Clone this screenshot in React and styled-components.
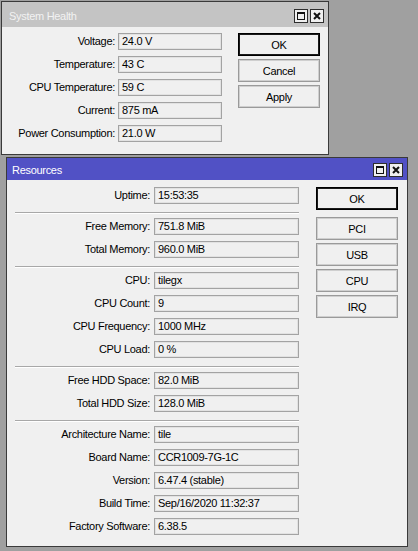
import React from 'react';
import styled, { createGlobalStyle } from 'styled-components';

const GlobalStyle = createGlobalStyle`
  html, body {
    margin: 0;
    padding: 0;
    background: #a0a0a0;
  }
  body {
    font-family: "Liberation Sans", Arial, sans-serif;
    font-size: 11px;
    letter-spacing: -0.3px;
    color: #000;
  }
`;

const Desktop = styled.div`
  position: relative;
  width: 418px;
  height: 551px;
  overflow: hidden;
  background: #a0a0a0;
`;

/* windows sit on the desktop at their own place */
const Window = styled.div`
  position: absolute;
  left: ${(p) => p.$x}px;
  top: ${(p) => p.$y}px;
  width: ${(p) => p.$w}px;
  height: ${(p) => p.$h}px;
  box-sizing: border-box;
  border: 1px solid #3a3a3a;
  background: #f0f0f0;
  display: flex;
  flex-direction: column;
`;

const TitleBar = styled.div`
  height: ${(p) => p.$height}px;
  box-sizing: border-box;
  padding: ${(p) => p.$padTop}px 4px 0 ${(p) => p.$padLeft}px;
  background: ${(p) => (p.$active ? '#5151c5' : '#c4c4c4')};
  color: ${(p) => (p.$active ? '#ffffff' : '#f2f2f2')};
  display: flex;
  align-items: center;
  justify-content: space-between;
  flex-shrink: 0;
`;

const TitleText = styled.span`
  font-size: 11px;
  line-height: 14px;
`;

const TitleButtons = styled.div`
  display: flex;
  gap: 2px;
`;

const TitleButton = styled.div`
  width: 14px;
  height: 14px;
  box-sizing: border-box;
  border: 1px solid #2e2e2e;
  background: #f0f0f0;
  display: flex;
  align-items: center;
  justify-content: center;
`;

const Body = styled.div`
  display: flex;
  padding: ${(p) => p.$padTop}px 0 0 ${(p) => p.$padLeft}px;
  gap: ${(p) => p.$gap}px;
`;

const Form = styled.div`
  display: flex;
  flex-direction: column;
  width: ${(p) => p.$width}px;
`;

const Row = styled.div`
  display: grid;
  grid-template-columns: ${(p) => p.$labelWidth}px 1fr;
  column-gap: ${(p) => p.$gap}px;
  height: 17px;
  margin-bottom: 6px;
`;

const Label = styled.div`
  text-align: right;
  line-height: 17px;
  white-space: nowrap;
`;

const Field = styled.div`
  box-sizing: border-box;
  height: 17px;
  border: 1px solid #a3a3a3;
  box-shadow: inset 0 0 0 1px #e2e2e2;
  padding-left: 3px;
  line-height: 15px;
  white-space: nowrap;
  overflow: hidden;
`;

const Separator = styled.div`
  height: 0;
  border-top: 1px solid #a8a8a8;
  border-bottom: 1px solid #ffffff;
  margin: 2px 0 4px;
`;

const Buttons = styled.div`
  display: flex;
  flex-direction: column;
  gap: 3px;
`;

const Button = styled.div`
  width: 82px;
  height: 23px;
  box-sizing: border-box;
  border: 1px solid ${(p) => (p.$default ? '#000' : '#9a9a9a')};
  box-shadow: inset 0 0 0 1px ${(p) => (p.$default ? '#1a1a1a' : '#cfcfcf')};
  background: #f0f0f0;
  display: flex;
  align-items: center;
  justify-content: center;
  font-size: 11px;
  margin-bottom: ${(p) => p.$spaceAfter || 0}px;
`;

const MaximizeIcon = () => (
  <svg width="10" height="10" viewBox="0 0 10 10">
    <rect x="1.5" y="1.5" width="7" height="7" fill="none" stroke="#111" strokeWidth="1" />
    <rect x="1" y="1" width="8" height="2" fill="#111" />
  </svg>
);

const CloseIcon = () => (
  <svg width="10" height="10" viewBox="0 0 10 10">
    <path d="M2 2 L8 8 M8 2 L2 8" stroke="#111" strokeWidth="2" />
  </svg>
);

const WindowTitle = ({ title, active, height, padTop, padLeft }) => (
  <TitleBar $active={active} $height={height} $padTop={padTop} $padLeft={padLeft}>
    <TitleText>{title}</TitleText>
    <TitleButtons>
      <TitleButton>
        <MaximizeIcon />
      </TitleButton>
      <TitleButton>
        <CloseIcon />
      </TitleButton>
    </TitleButtons>
  </TitleBar>
);

const healthRows = [
  ['Voltage', '24.0 V'],
  ['Temperature', '43 C'],
  ['CPU Temperature', '59 C'],
  ['Current', '875 mA'],
  ['Power Consumption', '21.0 W'],
];

// null marks a separator line between groups
const resourceRows = [
  ['Uptime', '15:53:35'],
  null,
  ['Free Memory', '751.8 MiB'],
  ['Total Memory', '960.0 MiB'],
  null,
  ['CPU', 'tilegx'],
  ['CPU Count', '9'],
  ['CPU Frequency', '1000 MHz'],
  ['CPU Load', '0 %'],
  null,
  ['Free HDD Space', '82.0 MiB'],
  ['Total HDD Size', '128.0 MiB'],
  null,
  ['Architecture Name', 'tile'],
  ['Board Name', 'CCR1009-7G-1C'],
  ['Version', '6.47.4 (stable)'],
  ['Build Time', 'Sep/16/2020 11:32:37'],
  ['Factory Software', '6.38.5'],
];

const renderRows = (rows, labelWidth, gap) =>
  rows.map((row, i) =>
    row ? (
      <Row key={i} $labelWidth={labelWidth} $gap={gap}>
        <Label>{row[0]}:</Label>
        <Field>{row[1]}</Field>
      </Row>
    ) : (
      <Separator key={i} />
    )
  );

const App = () => (
  <>
    <GlobalStyle />
    <Desktop>
      <Window $x={1} $y={1} $w={328} $h={154}>
        <WindowTitle title="System Health" height={25} padTop={3} padLeft={7} />
        <Body $padTop={6} $padLeft={8} $gap={16}>
          <Form $width={212}>{renderRows(healthRows, 105, 3)}</Form>
          <Buttons>
            <Button $default>OK</Button>
            <Button>Cancel</Button>
            <Button>Apply</Button>
          </Buttons>
        </Body>
      </Window>

      <Window $x={6} $y={157} $w={402} $h={390}>
        <WindowTitle title="Resources" active height={22} padTop={1} padLeft={5} />
        <Body $padTop={7} $padLeft={8} $gap={17}>
          <Form $width={284}>{renderRows(resourceRows, 135, 4)}</Form>
          <Buttons>
            <Button $default $spaceAfter={4}>OK</Button>
            <Button>PCI</Button>
            <Button>USB</Button>
            <Button>CPU</Button>
            <Button>IRQ</Button>
          </Buttons>
        </Body>
      </Window>
    </Desktop>
  </>
);

export default App;
